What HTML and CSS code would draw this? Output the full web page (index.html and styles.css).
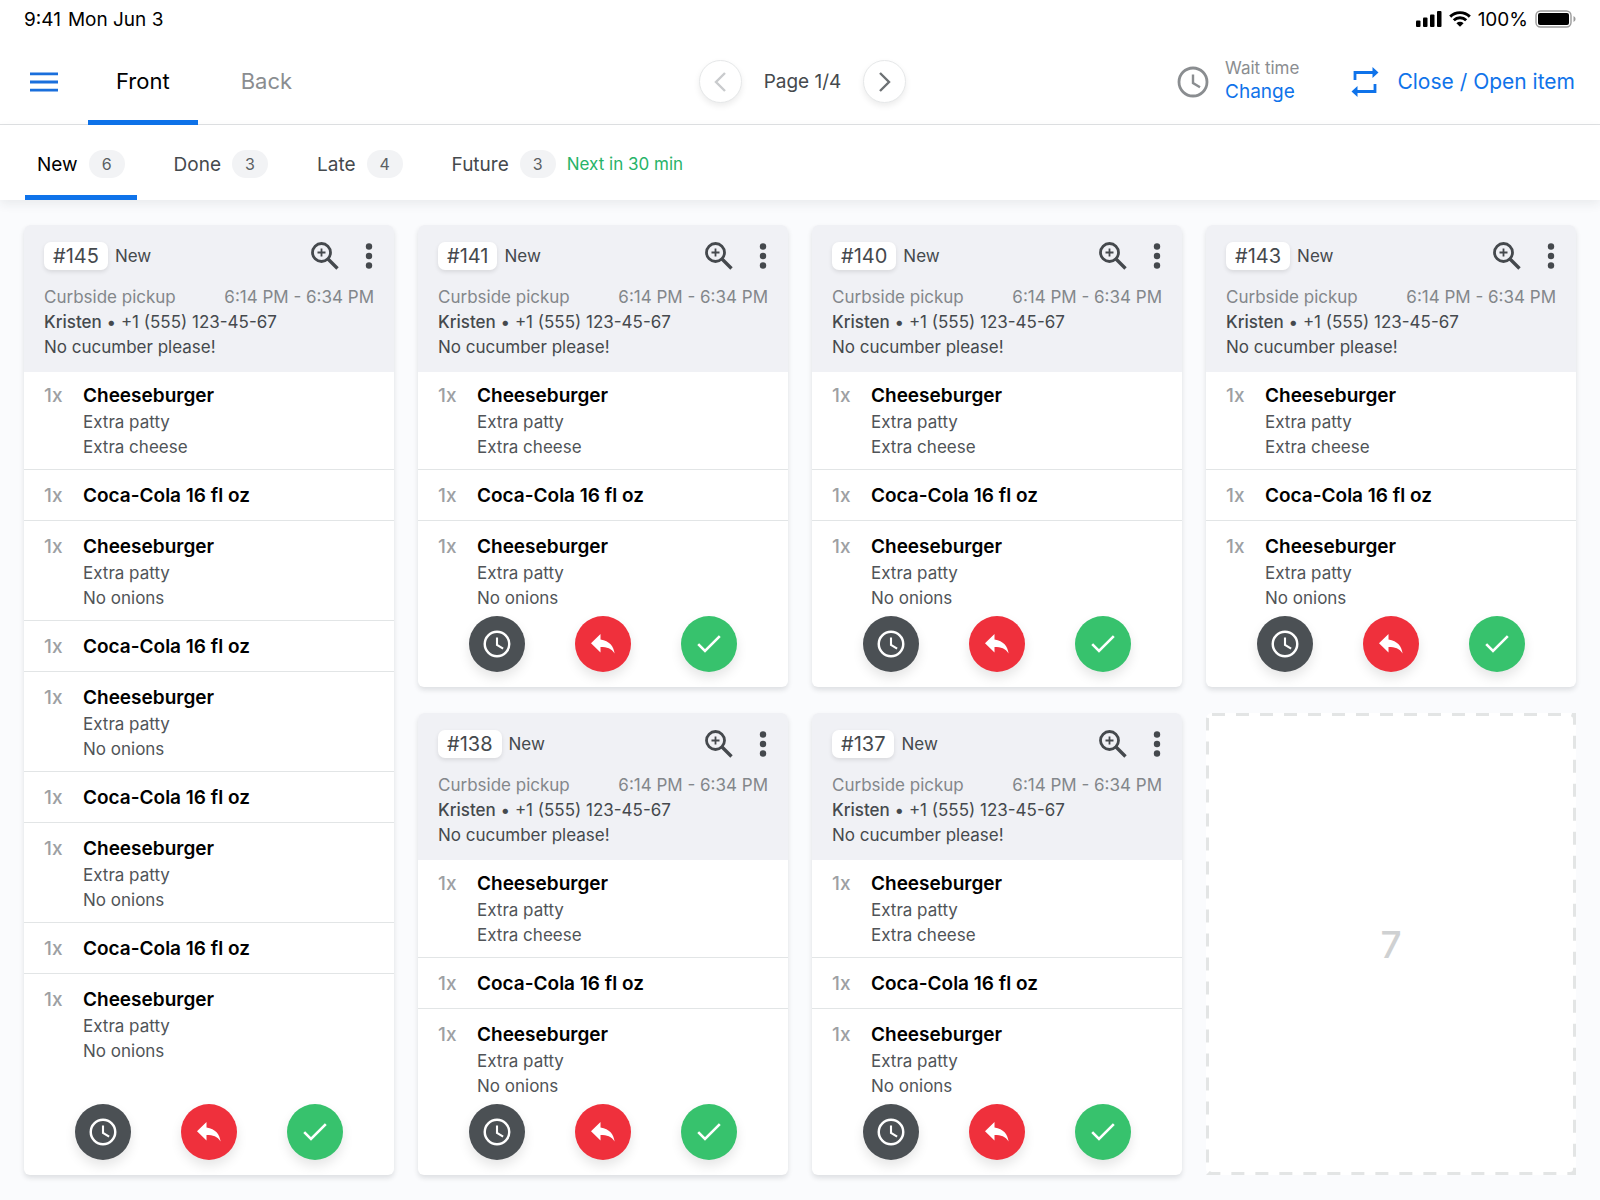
FILE: index.html
```html
<!DOCTYPE html>
<html lang="en">
<head>
    <meta charset="UTF-8">
    <meta name="viewport" content="width=device-width, initial-scale=1.0">
    <title>Kitchen orders</title>
    <link rel="stylesheet" href="styles.css">
</head>
<body>
    <!-- Shared icons -->
    <svg class="icon-defs" aria-hidden="true">
        <symbol id="icon-clock" viewBox="0 0 32 32">
            <circle cx="16" cy="16" r="14" fill="none" stroke="currentColor" stroke-width="2.8"/>
            <path d="M16 8.5V17l7 4.2" fill="none" stroke="currentColor" stroke-width="2.4"/>
        </symbol>
        <symbol id="icon-zoom" viewBox="0 0 28 28">
            <circle cx="10.5" cy="10.5" r="9" fill="none" stroke="currentColor" stroke-width="2.8"/>
            <path d="M10.5 6.5v8M6.5 10.5h8" fill="none" stroke="currentColor" stroke-width="1.8"/>
            <path d="M17 17l9.5 9.5" fill="none" stroke="currentColor" stroke-width="3.4"/>
        </symbol>
        <symbol id="icon-dots" viewBox="0 0 10 28">
            <circle cx="5" cy="4.5" r="3.2" fill="currentColor"/>
            <circle cx="5" cy="14" r="3.2" fill="currentColor"/>
            <circle cx="5" cy="23.5" r="3.2" fill="currentColor"/>
        </symbol>
        <symbol id="icon-reply" viewBox="0 0 24 20">
            <path d="M9.5 5.4V0L0 9.3l9.5 9.3v-5.6c6.5 0 11 1.4 14.1 6.4C22.7 12.3 18.600 6.7 9.5 5.4z" fill="currentColor"/>
        </symbol>
        <symbol id="icon-check" viewBox="0 0 24 18">
            <path d="M1.2 9.2l6.8 6.8L22.8 1.2" fill="none" stroke="currentColor" stroke-width="2.6"/>
        </symbol>
    </svg>

    <!-- Status bar -->
    <div class="status-bar">
        <div class="status-left">
            <span>9:41</span>
            <span>Mon Jun 3</span>
        </div>
        <div class="status-right">
            <svg width="26" height="16" viewBox="0 0 26 16" aria-hidden="true">
                <rect x="0" y="9.5" width="4.5" height="6.5" rx="1"/>
                <rect x="7" y="6.5" width="4.5" height="9.5" rx="1"/>
                <rect x="14" y="3.5" width="4.5" height="12.5" rx="1"/>
                <rect x="21" y="0" width="4.5" height="16" rx="1"/>
            </svg>
            <svg width="22" height="16" viewBox="0 0 22 16" aria-hidden="true">
                <path d="M1.2 5.6a14 14 0 0 1 19.6 0M4.8 9.3a8.8 8.8 0 0 1 12.4 0" fill="none" stroke="#000" stroke-width="2.9"/>
                <path d="M11 15.8l-3.6-3.6a5.2 5.2 0 0 1 7.2 0z"/>
            </svg>
            <span>100%</span>
            <svg width="41" height="18" viewBox="0 0 41 18" aria-hidden="true">
                <rect x="1" y="1" width="35" height="16" rx="4.5" fill="none" stroke="#9b9b9b" stroke-width="1.4"/>
                <rect x="3" y="3" width="31" height="12" rx="2"/>
                <path d="M38.500 6v6a3.200 3.200 0 0 0 0-6z" fill="#9b9b9b"/>
            </svg>
        </div>
    </div>

    <!-- Main header -->
    <header class="header">
        <div class="header-left">
            <button type="button" class="menu-button" aria-label="Menu">
                <svg width="28" height="20" viewBox="0 0 28 20"><path d="M0 1.8h28M0 10h28M0 18.2h28" stroke="currentColor" stroke-width="2.8"/></svg>
            </button>
            <nav class="main-tabs">
                <a href="#front" class="main-tab active">Front</a>
                <a href="#back" class="main-tab">Back</a>
            </nav>
        </div>

        <div class="pager">
            <button type="button" class="page-button" aria-label="Previous page" disabled>
                <svg width="12" height="20" viewBox="0 0 12 20"><path d="M11 1L2 10l9 9" fill="none" stroke="currentColor" stroke-width="2.4"/></svg>
            </button>
            <span>Page 1/4</span>
            <button type="button" class="page-button" aria-label="Next page">
                <svg width="12" height="20" viewBox="0 0 12 20"><path d="M1 1l9 9-9 9" fill="none" stroke="currentColor" stroke-width="2.4"/></svg>
            </button>
        </div>

        <div class="header-right">
            <div class="wait">
                <svg class="wait-icon" aria-hidden="true"><use href="#icon-clock"/></svg>
                <div class="wait-text">
                    <span>Wait time</span>
                    <a href="#change">Change</a>
                </div>
            </div>
            <button type="button" class="toggle-item">
                <svg width="28" height="30" viewBox="0 0 28 30" aria-hidden="true">
                    <path d="M4 13V5.500h18M24 17v7.500H6" fill="none" stroke="currentColor" stroke-width="2.8"/>
                    <path d="M21.500 0l6 5.500-6 5.500zM6.500 19l-6 5.500 6 5.500z" fill="currentColor"/>
                </svg>
                Close / Open item
            </button>
        </div>
    </header>

    <!-- Order filters -->
    <nav class="filters">
        <a href="#new" class="filter active">New <span class="count">6</span></a>
        <a href="#done" class="filter">Done <span class="count">3</span></a>
        <a href="#late" class="filter">Late <span class="count">4</span></a>
        <a href="#future" class="filter">Future <span class="count">3</span> <span class="next">Next in 30 min</span></a>
    </nav>

    <main class="board" id="board"></main>

    <script src="script.js"></script>
</body>
</html>
```
FILE: styles.css
```css
* {
    box-sizing: border-box;
}

body {
    margin: 0;
    min-height: 100vh;
    background-color: #fafbfd;
    color: #45494d;
    font-family: Inter, "Liberation Sans", sans-serif;
    font-size: 17px;
    line-height: 25px;
}

button {
    display: flex;
    align-items: center;
    justify-content: center;
    padding: 0;
    border: none;
    background: none;
    color: inherit;
    font: inherit;
    cursor: pointer;
}

a {
    color: inherit;
    text-decoration: none;
}

svg {
    display: block;
    flex: none;
}

.icon-defs {
    display: none;
}

/* Status bar */
.status-bar {
    display: flex;
    justify-content: space-between;
    align-items: center;
    height: 38px;
    padding: 0 24px;
    background: white;
    color: black;
    font-size: 19px;
}

.status-left,
.status-right {
    display: flex;
    align-items: center;
    gap: 7px;
}

/* Main header */
.header {
    display: grid;
    grid-template-columns: 1fr auto 1fr;
    height: 87px;
    padding: 0 25px 0 30px;
    border-bottom: 1px solid #dfe1e3;
    background: white;
}

.header-left,
.header-right,
.pager,
.wait {
    display: flex;
    align-items: center;
}

.header-left {
    gap: 30px;
}

.menu-button {
    color: #1a6fdc;
}

.main-tabs {
    display: flex;
    gap: 15px;
    height: 87px;
}

.main-tab {
    display: flex;
    align-items: center;
    padding: 5px 28px 0;
    border-bottom: 5px solid transparent;
    color: #8a8d90;
    font-size: 22px;
}

.main-tab.active {
    border-color: #0f73ea;
    color: black;
}

.pager {
    gap: 22px;
    font-size: 19px;
}

.page-button {
    width: 43px;
    height: 43px;
    border: 1px solid #e6e8e9;
    border-radius: 50%;
    background: white;
    color: #6d7174;
    box-shadow: 0 3px 6px rgba(0, 0, 0, 0.08);
}

.page-button:disabled {
    color: #c9cbcd;
}

.header-right {
    justify-content: flex-end;
    gap: 52px;
}

.wait {
    gap: 16px;
    color: #8a8d90;
}

.wait-icon {
    width: 32px;
    height: 32px;
}

.wait-text {
    display: flex;
    flex-direction: column;
    padding-bottom: 3px;
    line-height: 24px;
}

.wait-text a {
    color: #0f73ea;
    font-size: 19px;
}

.toggle-item {
    gap: 18px;
    color: #0f73ea;
    font-size: 21px;
}

/* Order filters */
.filters {
    position: relative;
    display: flex;
    gap: 25px;
    height: 75px;
    padding: 0 25px;
    background: white;
    box-shadow: 0 4px 10px rgba(40, 50, 50, 0.08);
    font-size: 19px;
}

.filter {
    display: flex;
    align-items: center;
    gap: 11px;
    padding: 8px 12px 0;
    border-bottom: 5px solid transparent;
}

.filter.active {
    border-color: #0f73ea;
    color: black;
}

.count {
    width: 36px;
    border-radius: 14px;
    background: #f2f3f5;
    color: #5b5f63;
    font-size: 16px;
    line-height: 28px;
    text-align: center;
}

.next {
    color: #27b368;
    font-size: 17px;
}

/* Board */
.board {
    display: grid;
    grid-template-columns: repeat(4, 1fr);
    gap: 26px 24px;
    padding: 25px 24px;
}

.card {
    display: flex;
    flex-direction: column;
    border-radius: 6px;
    background: white;
    box-shadow: 0 3px 5px rgba(30, 40, 50, 0.13);
}

.card.tall {
    grid-row: span 2;
}

.card-header {
    padding: 17px 20px 12px;
    border-radius: 6px 6px 0 0;
    background: #f0f1f5;
}

.card-top {
    display: flex;
    align-items: center;
    margin-bottom: 15px;
}

.card-number {
    margin-right: 7px;
    padding: 0 9px;
    border-radius: 7px;
    background: white;
    box-shadow: 0 2px 4px rgba(0, 0, 0, 0.1);
    font-size: 20px;
    line-height: 28px;
}

.zoom-button {
    margin-left: auto;
}

.zoom-button svg {
    width: 28px;
    height: 28px;
}

.more-button {
    margin-left: 25px;
}

.more-button svg {
    width: 10px;
    height: 28px;
}

.card-line {
    margin: 0;
}

.card-line.pickup {
    display: flex;
    justify-content: space-between;
    color: #83878b;
}

.card-line b {
    font-weight: 500;
}

.items,
.mods {
    margin: 0;
    padding: 0;
    list-style: none;
}

.item {
    display: flex;
    padding: 14px 20px 12px;
    border-bottom: 1px solid #e2e5e6;
}

.item:first-child {
    padding-top: 12px;
}

.item:last-child {
    padding-bottom: 8px;
    border-bottom: none;
}

.qty {
    width: 39px;
    color: #9da0a3;
    font-size: 19px;
    font-weight: 500;
    line-height: 24px;
}

.name {
    color: black;
    font-size: 19px;
    font-weight: 600;
    line-height: 24px;
}

.item .mods {
    margin: 2px 0 -3px;
    color: #505458;
}

.actions {
    display: flex;
    justify-content: center;
    gap: 50px;
    margin-top: auto;
    padding-bottom: 15px;
}

.action {
    width: 56px;
    height: 56px;
    border-radius: 50%;
    color: white;
    box-shadow: 0 6px 12px rgba(0, 0, 0, 0.1);
}

.action.delay {
    background: #4b5054;
}

.action.return {
    background: #ef303c;
}

.action.done {
    background: #37c26d;
}

.action.delay svg {
    width: 28px;
    height: 28px;
}

.action.return svg {
    width: 24px;
    height: 20px;
}

.action.done svg {
    width: 24px;
    height: 18px;
}

/* Free place on the board */
.slot {
    position: relative;
    display: flex;
    align-items: center;
    justify-content: center;
    border-radius: 6px;
    background: white;
    color: #cfd1d2;
    font-size: 37px;
    font-weight: 500;
}

.slot svg {
    position: absolute;
    inset: 0;
    width: 100%;
    height: 100%;
}

.slot rect {
    fill: none;
    stroke: #e3e5e5;
    stroke-width: 6px;
    stroke-dasharray: 13 11;
}
```
FILE: script.js
```js
const burger = { name: "Cheeseburger", mods: ["Extra patty", "No onions"] };
const cheeseBurger = { name: "Cheeseburger", mods: ["Extra patty", "Extra cheese"] };
const cola = { name: "Coca-Cola 16 fl oz", mods: [] };

const shortOrder = [cheeseBurger, cola, burger];
const longOrder = [cheeseBurger, cola, burger, cola, burger, cola, burger, cola, burger];

const orders = [
    { number: 145, items: longOrder, tall: true },
    { number: 141, items: shortOrder },
    { number: 140, items: shortOrder },
    { number: 143, items: shortOrder },
    { number: 138, items: shortOrder },
    { number: 137, items: shortOrder }
];

function icon(name) {
    return `<svg aria-hidden="true"><use href="#icon-${name}"/></svg>`;
}

function itemHtml(item) {
    const mods = item.mods.map(mod => `<li>${mod}</li>`).join("");
    return `
        <li class="item">
            <span class="qty">1x</span>
            <div>
                <div class="name">${item.name}</div>
                ${mods ? `<ul class="mods">${mods}</ul>` : ""}
            </div>
        </li>`;
}

function cardHtml(order) {
    return `
        <article class="card${order.tall ? " tall" : ""}">
            <div class="card-header">
                <div class="card-top">
                    <span class="card-number">#${order.number}</span>
                    <span>New</span>
                    <button type="button" class="zoom-button" aria-label="Zoom order">${icon("zoom")}</button>
                    <button type="button" class="more-button" aria-label="More">${icon("dots")}</button>
                </div>
                <p class="card-line pickup"><span>Curbside pickup</span><span>6:14 PM - 6:34 PM</span></p>
                <p class="card-line"><b>Kristen</b> • +1 (555) 123-45-67</p>
                <p class="card-line">No cucumber please!</p>
            </div>
            <ul class="items">${order.items.map(itemHtml).join("")}</ul>
            <div class="actions">
                <button type="button" class="action delay" aria-label="Delay">${icon("clock")}</button>
                <button type="button" class="action return" aria-label="Return">${icon("reply")}</button>
                <button type="button" class="action done" aria-label="Done">${icon("check")}</button>
            </div>
        </article>`;
}

// Orders first, then the next free slot
document.getElementById("board").innerHTML = orders.map(cardHtml).join("") +
    `<div class="slot"><svg aria-hidden="true"><rect width="100%" height="100%" rx="6"/></svg>7</div>`;
```
